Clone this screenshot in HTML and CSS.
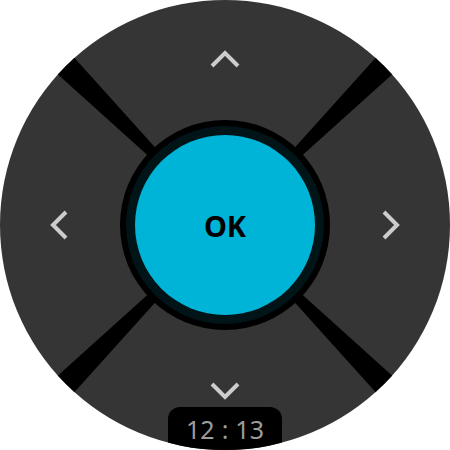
FILE: index.html
```html
<!DOCTYPE html>
<html>
<head>
<meta charset="utf-8">
<link rel="stylesheet" href="styles.css">
</head>
<body>
<div class="watch">
  <svg class="face" width="450" height="450" viewBox="0 0 450 450">
    <g class="dividers">
      <polygon points="225,225 470,212.2 470,237.8" transform="rotate(45 225 225)"/>
      <polygon points="225,225 470,212.2 470,237.8" transform="rotate(135 225 225)"/>
      <polygon points="225,225 470,212.2 470,237.8" transform="rotate(225 225 225)"/>
      <polygon points="225,225 470,212.2 470,237.8" transform="rotate(315 225 225)"/>
    </g>
    <g class="chevrons">
      <polyline points="212,66 225,53 238,66"/>
      <polyline points="212,384 225,397 238,384"/>
      <polyline points="66,212 53,225 66,238"/>
      <polyline points="384,212 397,225 384,238"/>
    </g>
  </svg>
  <div class="ring">
    <div class="inner-ring">
      <div class="ok">OK</div>
    </div>
  </div>
  <div class="time">12<span class="colon">:</span>13</div>
</div>
</body>
</html>
```
FILE: styles.css
```css
html, body {
  margin: 0;
  padding: 0;
  background: #ffffff;
}
.watch {
  position: relative;
  width: 450px;
  height: 450px;
  border-radius: 50%;
  overflow: hidden;
  background: #353535;
  display: grid;
  place-items: center;
}
.face {
  position: absolute;
  left: 0;
  top: 0;
}
.dividers polygon {
  fill: #000000;
}
.chevrons polyline {
  fill: none;
  stroke: #cccccc;
  stroke-width: 4;
  stroke-linecap: butt;
  stroke-linejoin: miter;
}
.ring {
  position: relative;
  width: 210px;
  height: 210px;
  border-radius: 50%;
  background: #000000;
  display: grid;
  place-items: center;
}
.inner-ring {
  width: 198px;
  height: 198px;
  border-radius: 50%;
  background: #011417;
  display: grid;
  place-items: center;
}
.ok {
  width: 180px;
  height: 180px;
  border-radius: 50%;
  background: #00b4d8;
  display: flex;
  align-items: center;
  justify-content: center;
  font-family: "Noto Sans", "Open Sans", sans-serif;
  font-weight: 700;
  font-size: 29px;
  color: #000000;
}
.time {
  position: absolute;
  left: 168px;
  bottom: 0;
  width: 114px;
  height: 43px;
  border-radius: 12px 12px 0 0;
  background: #000000;
  color: #9c9c9c;
  font-family: "Noto Sans", "Open Sans", sans-serif;
  font-size: 25px;
  text-align: center;
  line-height: 44px;
  box-sizing: border-box;
  padding-bottom: 4px;
}
.colon {
  margin: 0 7px;
}
```
